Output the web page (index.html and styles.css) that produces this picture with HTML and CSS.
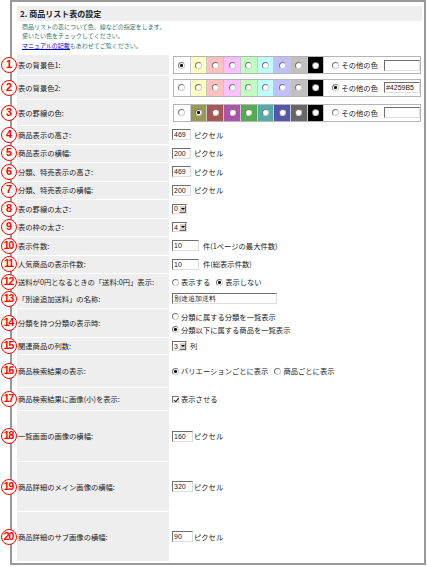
FILE: index.html
```html
<!DOCTYPE html>
<html lang="ja">
<head>
    <meta charset="UTF-8">
    <title>商品リスト表の設定</title>
    <link rel="stylesheet" href="styles.css">
</head>
<body>
    <div class="panel">
        <h2 class="title">2. 商品リスト表の設定</h2>
        <p class="intro">
            商品リストの表について色、線などの指定をします。<br>
            使いたい色をチェックしてください。<br>
            <a href="#">マニュアルの記載</a>もあわせてご覧ください。
        </p>

        <div class="settings">
            <div class="row h-c1">
                <div class="label"><span class="num">1</span>表の背景色1:</div>
                <div class="value">
                    <div class="swatches">
                        <span class="sw" style="background:#ffffff"><input type="radio" name="bg1" checked></span>
                        <span class="sw" style="background:#ffffc0"><input type="radio" name="bg1"></span>
                        <span class="sw" style="background:#ffc0c0"><input type="radio" name="bg1"></span>
                        <span class="sw" style="background:#ffc0ff"><input type="radio" name="bg1"></span>
                        <span class="sw" style="background:#c0ffc0"><input type="radio" name="bg1"></span>
                        <span class="sw" style="background:#c0ffff"><input type="radio" name="bg1"></span>
                        <span class="sw" style="background:#c0c0ff"><input type="radio" name="bg1"></span>
                        <span class="sw" style="background:#c0c0c0"><input type="radio" name="bg1"></span>
                        <span class="sw" style="background:#000000"><input type="radio" name="bg1"></span>
                        <span class="other"><input type="radio" name="bg1">その他の色<input type="text" class="color-in"></span>
                    </div>
                </div>
            </div>
            <div class="row h-c2">
                <div class="label"><span class="num">2</span>表の背景色2:</div>
                <div class="value">
                    <div class="swatches">
                        <span class="sw" style="background:#ffffff"><input type="radio" name="bg2"></span>
                        <span class="sw" style="background:#ffffc0"><input type="radio" name="bg2"></span>
                        <span class="sw" style="background:#ffc0c0"><input type="radio" name="bg2"></span>
                        <span class="sw" style="background:#ffc0ff"><input type="radio" name="bg2"></span>
                        <span class="sw" style="background:#c0ffc0"><input type="radio" name="bg2"></span>
                        <span class="sw" style="background:#c0ffff"><input type="radio" name="bg2"></span>
                        <span class="sw" style="background:#c0c0ff"><input type="radio" name="bg2"></span>
                        <span class="sw" style="background:#c0c0c0"><input type="radio" name="bg2"></span>
                        <span class="sw" style="background:#000000"><input type="radio" name="bg2"></span>
                        <span class="other"><input type="radio" name="bg2" checked>その他の色<input type="text" class="color-in" value="#4259B5"></span>
                    </div>
                </div>
            </div>
            <div class="row h-c3">
                <div class="label"><span class="num">3</span>表の罫線の色:</div>
                <div class="value">
                    <div class="swatches">
                        <span class="sw" style="background:#ffffff"><input type="radio" name="line"></span>
                        <span class="sw" style="background:#999955"><input type="radio" name="line" checked></span>
                        <span class="sw" style="background:#aa5555"><input type="radio" name="line"></span>
                        <span class="sw" style="background:#aa55aa"><input type="radio" name="line"></span>
                        <span class="sw" style="background:#55aa55"><input type="radio" name="line"></span>
                        <span class="sw" style="background:#55aaaa"><input type="radio" name="line"></span>
                        <span class="sw" style="background:#5555aa"><input type="radio" name="line"></span>
                        <span class="sw" style="background:#666666"><input type="radio" name="line"></span>
                        <span class="sw" style="background:#000000"><input type="radio" name="line"></span>
                        <span class="other"><input type="radio" name="line">その他の色<input type="text" class="color-in"></span>
                    </div>
                </div>
            </div>

            <div class="row">
                <div class="label"><span class="num">4</span>商品表示の高さ:</div>
                <div class="value"><input type="text" class="px-in" value="469">ピクセル</div>
            </div>
            <div class="row">
                <div class="label"><span class="num">5</span>商品表示の横幅:</div>
                <div class="value"><input type="text" class="px-in" value="200">ピクセル</div>
            </div>
            <div class="row">
                <div class="label"><span class="num">6</span>分類、特売表示の高さ:</div>
                <div class="value"><input type="text" class="px-in" value="469">ピクセル</div>
            </div>
            <div class="row">
                <div class="label"><span class="num">7</span>分類、特売表示の横幅:</div>
                <div class="value"><input type="text" class="px-in" value="200">ピクセル</div>
            </div>
            <div class="row">
                <div class="label"><span class="num">8</span>表の罫線の太さ:</div>
                <div class="value"><span class="sel">0<span class="arrow"></span></span></div>
            </div>
            <div class="row">
                <div class="label"><span class="num">9</span>表の枠の太さ:</div>
                <div class="value"><span class="sel">4<span class="arrow"></span></span></div>
            </div>
            <div class="row">
                <div class="label"><span class="num two">10</span>表示件数:</div>
                <div class="value"><input type="text" class="count-in" value="10">件(1ページの最大件数)</div>
            </div>
            <div class="row">
                <div class="label"><span class="num two">11</span>人気商品の表示件数:</div>
                <div class="value"><input type="text" class="count-in" value="10">件(総表示件数)</div>
            </div>
            <div class="row h-12">
                <div class="label"><span class="num two">12</span>送料が0円となるときの「送料:0円」表示:</div>
                <div class="value">
                    <label class="opt"><input type="radio" name="zero">表示する</label>
                    <label class="opt"><input type="radio" name="zero" checked>表示しない</label>
                </div>
            </div>
            <div class="row h-13">
                <div class="label"><span class="num two">13</span>「別途追加送料」の名称:</div>
                <div class="value"><input type="text" class="name-in" value="別途追加送料"></div>
            </div>
            <div class="row h-14">
                <div class="label"><span class="num two">14</span>分類を持つ分類の表示時:</div>
                <div class="value stack">
                    <label class="opt"><input type="radio" name="cat">分類に属する分類を一覧表示</label>
                    <label class="opt"><input type="radio" name="cat" checked>分類以下に属する商品を一覧表示</label>
                </div>
            </div>
            <div class="row h-15">
                <div class="label"><span class="num two">15</span>関連商品の列数:</div>
                <div class="value"><span class="sel">3<span class="arrow"></span></span>列</div>
            </div>
            <div class="row h-16">
                <div class="label"><span class="num two">16</span>商品検索結果の表示:</div>
                <div class="value">
                    <label class="opt"><input type="radio" name="search" checked>バリエーションごとに表示</label>
                    <label class="opt"><input type="radio" name="search">商品ごとに表示</label>
                </div>
            </div>
            <div class="row h-17">
                <div class="label"><span class="num two">17</span>商品検索結果に画像(小)を表示:</div>
                <div class="value"><label class="opt"><input type="checkbox" checked>表示させる</label></div>
            </div>
            <div class="row h-big">
                <div class="label"><span class="num two">18</span>一覧画面の画像の横幅:</div>
                <div class="value tight"><input type="text" class="img-in" value="160">ピクセル</div>
            </div>
            <div class="row h-big2">
                <div class="label"><span class="num two">19</span>商品詳細のメイン画像の横幅:</div>
                <div class="value tight"><input type="text" class="img-in" value="320">ピクセル</div>
            </div>
            <div class="row h-big2">
                <div class="label"><span class="num two">20</span>商品詳細のサブ画像の横幅:</div>
                <div class="value tight"><input type="text" class="img-in" value="90">ピクセル</div>
            </div>
        </div>
    </div>
</body>
</html>
```

FILE: styles.css
```css
* {
    margin: 0;
    padding: 0;
    box-sizing: border-box;
}

body {
    font-family: "Noto Sans CJK JP", "Liberation Sans", sans-serif;
    font-size: 7.3px;
    color: #222;
    background-color: #fff;
}

.panel {
    margin-left: 10px;
    width: 416px;
    height: 565px;
    border: 2px solid #999;
    padding: 4px 2px 0 5px;
}

.title {
    background-color: #eee;
    height: 15px;
    line-height: 15px;
    font-size: 8px;
    font-weight: bold;
    padding-left: 3px;
}

.intro {
    height: 34px;
    padding: 1px 0 0 5px;
    font-size: 6px;
    line-height: 9.3px;
    color: #2a7a7a;
}

.intro a {
    color: #0000cc;
    text-decoration: underline;
}

.settings {
    display: flex;
    flex-direction: column;
    gap: 1px;
}

.row {
    display: grid;
    grid-template-columns: 152px 1fr;
    height: 17.5px;
}

.h-c1 { height: 20px; }
.h-c2 { height: 23px; }
.h-c3 { height: 25px; }
.h-12 { height: 14px; }
.h-13 { height: 19px; }
.h-14 { height: 28px; }
.h-15 { height: 16px; }
.h-16 { height: 32px; }
.h-17 { height: 22px; }
.h-big { height: 50px; }
.h-big2 { height: 49px; }

.label {
    background-color: #eee;
    display: flex;
    align-items: center;
    white-space: nowrap;
}

/* red circled numbers sitting over the left border */
.num {
    flex: none;
    width: 16px;
    height: 16px;
    margin-left: -16px;
    margin-right: 1px;
    border: 1.6px solid #f00;
    border-radius: 50%;
    background-color: #fff;
    color: #f00;
    font-family: "Liberation Sans", sans-serif;
    font-weight: bold;
    font-size: 11px;
    line-height: 13px;
    text-align: center;
}

.num.two {
    letter-spacing: -1.2px;
    text-indent: -1px;
    font-size: 10.5px;
}

.value {
    display: flex;
    align-items: center;
    gap: 3px;
    padding-left: 3px;
    white-space: nowrap;
}

.value.tight {
    gap: 1px;
}

.value.stack {
    flex-direction: column;
    align-items: flex-start;
    justify-content: center;
    gap: 3px;
}

.swatches {
    display: flex;
    width: 248px;
    height: 18px;
    margin-left: 1px;
    border: 1px solid #b5b5b5;
}

.sw {
    width: 17.2px;
    display: flex;
    align-items: center;
    justify-content: center;
    border-right: 1px solid #c8c8c8;
}

.other {
    flex: 1;
    display: flex;
    align-items: center;
    padding-left: 8px;
    gap: 2px;
    background-color: #fff;
}

input[type="radio"],
input[type="checkbox"] {
    appearance: none;
    -webkit-appearance: none;
    flex: none;
    width: 7px;
    height: 7px;
    border: 1px solid #888;
    border-color: #777 #ccc #ccc #777;
    background-color: #fff;
}

input[type="radio"] {
    border-radius: 50%;
}

input[type="radio"]:checked {
    background: radial-gradient(circle, #111 0 1.3px, #fff 1.7px);
}

input[type="checkbox"] {
    position: relative;
}

input[type="checkbox"]:checked::after {
    content: "";
    position: absolute;
    left: 1.5px;
    top: 0;
    width: 2px;
    height: 3.5px;
    border: solid #111;
    border-width: 0 1.2px 1.2px 0;
    transform: rotate(40deg);
}

input[type="text"] {
    height: 11px;
    border: 1px solid;
    border-color: #6f6f6f #ddd #ddd #6f6f6f;
    background-color: #fff;
    font-family: "Liberation Sans", sans-serif;
    font-size: 7px;
    color: #222;
    padding: 0 1px;
    outline: none;
}

.color-in {
    width: 36px;
    margin-left: 4px;
}

.px-in {
    width: 19px;
}

.count-in {
    width: 27px;
    margin-right: 1px;
}

.name-in {
    width: 105px;
    font-family: "Noto Sans CJK JP", sans-serif;
}

.img-in {
    width: 21px;
}

.sel {
    display: inline-flex;
    align-items: center;
    justify-content: space-between;
    width: 15px;
    height: 10px;
    border: 1px solid;
    border-color: #6f6f6f #ddd #ddd #6f6f6f;
    background-color: #fff;
    font-family: "Liberation Sans", sans-serif;
    font-size: 7px;
    padding-left: 1px;
}

.arrow {
    width: 7px;
    height: 8px;
    background-color: #d4d0c8;
    border: 1px solid;
    border-color: #fff #666 #666 #fff;
    position: relative;
}

.arrow::after {
    content: "";
    position: absolute;
    left: 1px;
    top: 2px;
    border: 2px solid transparent;
    border-top: 2px solid #000;
}

.opt {
    display: inline-flex;
    align-items: center;
    gap: 2px;
    margin-right: 3px;
}
```
